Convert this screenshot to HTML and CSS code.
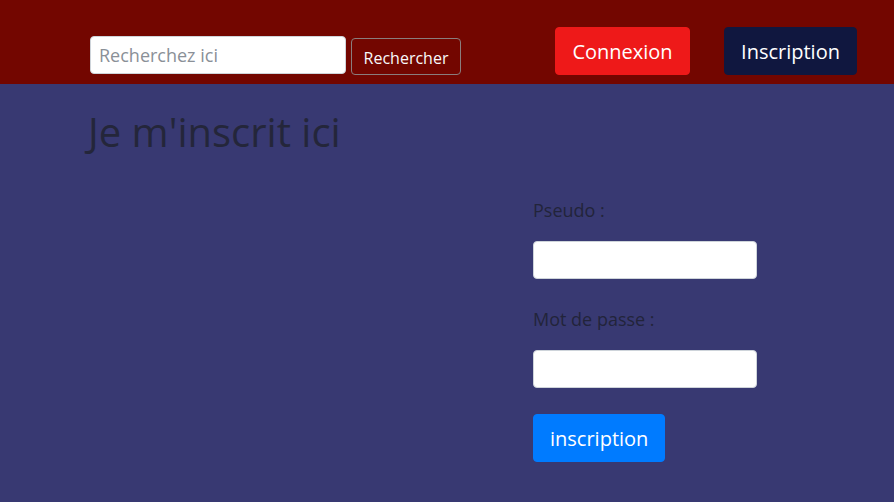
FILE: index.html
```html
<!DOCTYPE html>
<html lang="fr">
<head>
<meta charset="utf-8">
<title>Inscription</title>
<link rel="stylesheet" href="styles.css">
</head>
<body>
<header class="topbar">
  <form class="search">
    <input class="search-input" type="text" placeholder="Recherchez ici">
    <button class="search-btn" type="button">Rechercher</button>
  </form>
  <nav class="auth">
    <a class="btn btn-connexion" href="#">Connexion</a>
    <a class="btn btn-inscription" href="#">Inscription</a>
  </nav>
</header>
<main class="content">
  <h1 class="title">Je m'inscrit ici</h1>
  <div class="layout">
    <div class="left-col"></div>
    <form class="signup">
      <label class="field-label" for="pseudo">Pseudo :</label>
      <input class="field-input" id="pseudo" type="text">
      <label class="field-label field-label-next" for="mdp">Mot de passe :</label>
      <input class="field-input" id="mdp" type="password">
      <button class="btn btn-submit" type="button">inscription</button>
    </form>
  </div>
</main>
</body>
</html>
```

FILE: styles.css
```css
* { box-sizing: border-box; }
html, body {
  margin: 0;
  padding: 0;
}
body {
  font-family: "Open Sans", "Liberation Sans", sans-serif;
  background: #383972;
  color: #212529;
  font-size: 16px;
  line-height: 1.5;
  min-height: 502px;
}
.topbar {
  background: #730600;
  height: 84px;
  display: flex;
  align-items: flex-start;
  padding: 0 37px 0 90px;
}
.search {
  display: flex;
  align-items: flex-start;
  margin-top: 36px;
}
.search-input {
  width: 256px;
  height: 38px;
  border: 1px solid #ced4da;
  border-radius: 4px;
  padding: 6px 8px;
  font-family: inherit;
  font-size: 18px;
  color: #495057;
  background: #fff;
  outline: none;
}
.search-input::placeholder { color: #8a9097; }
.search-btn {
  margin-left: 5px;
  margin-top: 2px;
  height: 37px;
  width: 110px;
  padding: 2px 8px 0;
  border: 1px solid #8a7d7d;
  border-radius: 4px;
  background: transparent;
  color: #f8f9fa;
  font-family: inherit;
  font-size: 16px;
}
.auth {
  margin-left: auto;
  margin-top: 27px;
  display: flex;
  gap: 34px;
}
.btn {
  display: inline-block;
  height: 48px;
  padding: 9px 16px 7px;
  border: 1px solid transparent;
  border-radius: 4px;
  font-family: inherit;
  font-size: 20px;
  line-height: 30px;
  color: #fff;
  text-decoration: none;
  text-align: center;
}
.btn-connexion { background: #ee1919; border-color: #ee1919; width: 135px; }
.btn-inscription { background: #10173f; border-color: #10173f; width: 133px; }
.content {
  padding: 0 0 0 88px;
}
.title {
  margin: 24px 0 0;
  font-size: 40px;
  font-weight: 400;
  line-height: 48px;
  color: #24263a;
}
.layout {
  display: grid;
  grid-template-columns: 445px 224px;
  margin-top: 41px;
}
.signup {
  display: flex;
  flex-direction: column;
  align-items: flex-start;
}
.field-label {
  font-size: 18px;
  line-height: 27px;
  margin-bottom: 17px;
  color: #22243a;
}
.field-label-next { margin-top: 27px; }
.field-input {
  width: 224px;
  height: 38px;
  border: 1px solid #ced4da;
  border-radius: 4px;
  background: #fff;
  outline: none;
}
.btn-submit {
  margin-top: 26px;
  width: 132px;
  padding: 9px 16px 7px;
  background: #007bff;
  border-color: #007bff;
}
```
